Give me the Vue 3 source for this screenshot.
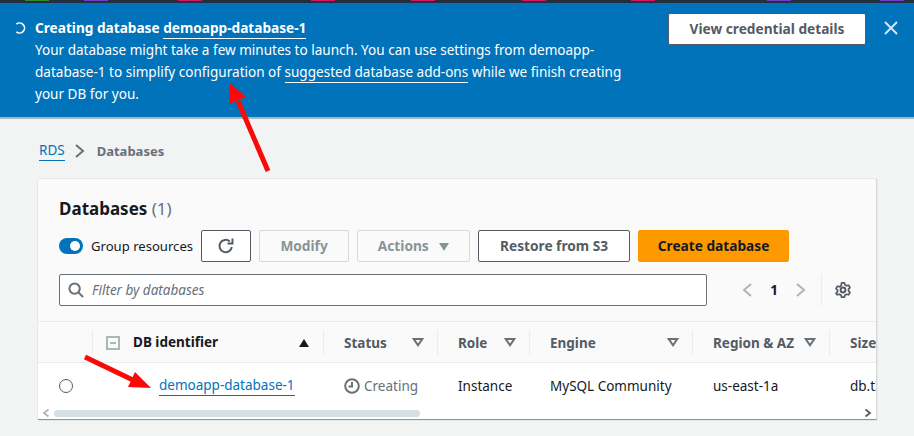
<template>
  <div class="page">
    <div class="topbar">
      <span v-for="tab in topTabs" :key="tab.x" class="tab" :style="{ left: tab.x + 'px', background: tab.color }"></span>
    </div>

    <div class="flash">
      <svg class="spinner" width="14" height="14" viewBox="0 0 14 14" fill="none">
        <path d="M3.4 3.100A5 5 0 1 1 3.400 10.900" stroke="#fff" stroke-width="1.600" />
      </svg>
      <div class="flash-body">
        <div class="flash-title">Creating database <a class="flash-link">demoapp-database-1</a></div>
        <div class="flash-text">
          Your database might take a few minutes to launch. You can use settings from demoapp-<br />
          database-1 to simplify configuration of <a class="flash-link">suggested database add-ons</a> while we finish creating<br />
          your DB for you.
        </div>
      </div>
      <button class="btn credential">View credential details</button>
      <svg class="close" width="16" height="16" viewBox="0 0 16 16" fill="none">
        <path d="M2 2l12 12M14 2L2 14" stroke="#d5e6f3" stroke-width="2" />
      </svg>
    </div>

    <div class="crumbs">
      <a class="crumb-link">RDS</a>
      <svg width="12" height="16" viewBox="0 0 12 16" fill="none">
        <path d="M2 2l7 6-7 6" stroke="#687078" stroke-width="2" />
      </svg>
      <span class="crumb-current">Databases</span>
    </div>

    <section class="card">
      <div class="card-head">
        <h2 class="title">Databases <span class="count">(1)</span></h2>
        <div class="actions">
          <span class="toggle"><span class="knob"></span></span>
          <span class="toggle-label">Group resources</span>
          <button class="btn refresh">
            <svg width="18" height="18" viewBox="0 0 18 18" fill="none">
              <path d="M14.800 10a6.200 6.200 0 1 1-2-5.600" stroke="#545b64" stroke-width="2" />
              <path d="M15.500 1.500v5h-5" stroke="#545b64" stroke-width="2" />
            </svg>
          </button>
          <button class="btn disabled modify">Modify</button>
          <button class="btn disabled actions-btn">Actions <i class="caret"></i></button>
          <button class="btn restore">Restore from S3</button>
          <button class="btn primary">Create database</button>
        </div>
        <div class="filter-row">
          <div class="filter">
            <svg width="16" height="16" viewBox="0 0 16 16" fill="none">
              <circle cx="6.600" cy="6.600" r="5.200" stroke="#687078" stroke-width="2" />
              <path d="M10.400 10.400l4.600 4.600" stroke="#687078" stroke-width="2" />
            </svg>
            <span class="placeholder">Filter by databases</span>
          </div>
          <div class="pager">
            <svg width="12" height="16" viewBox="0 0 12 16" fill="none">
              <path d="M10 2L3 8l7 6" stroke="#aab7b8" stroke-width="2" />
            </svg>
            <span class="page-num">1</span>
            <svg width="12" height="16" viewBox="0 0 12 16" fill="none">
              <path d="M2 2l7 6-7 6" stroke="#aab7b8" stroke-width="2" />
            </svg>
          </div>
          <div class="prefs">
            <svg width="18" height="18" viewBox="0 0 18 18" fill="none">
              <circle cx="9" cy="9" r="2.400" stroke="#545b64" stroke-width="2" />
              <path d="M7.600 1.800h2.800l.5 2 1.700 1 2-.6 1.400 2.400-1.500 1.500v1.800l1.500 1.500-1.400 2.400-2-.6-1.700 1-.5 2H7.600l-.5-2-1.700-1-2 .6L2 12.400l1.500-1.500V9.100L2 7.600 3.400 5.200l2 .6 1.700-1z" stroke="#545b64" stroke-width="1.700" stroke-linejoin="round" />
            </svg>
          </div>
        </div>
      </div>

      <div class="table">
        <div class="thead">
          <div class="cell select"></div>
          <div class="cell th ident">
            <span class="checkbox"><i></i></span>
            <span class="ident-label">DB identifier</span>
            <i class="sort-up"></i>
          </div>
          <div v-for="col in columns" :key="col.name" class="cell th" :style="{ width: col.width + 'px' }">
            <span>{{ col.name }}</span>
            <svg v-if="col.sort" class="sort-down" width="12" height="9" viewBox="0 0 12 9" fill="none">
              <path d="M1.800 1h8.400L6 7.200z" stroke="#687078" stroke-width="2" />
            </svg>
          </div>
        </div>
        <div class="tbody">
          <div class="cell select"><span class="radio"></span></div>
          <div class="cell ident ident-body"><a class="db-link">demoapp-database-1</a></div>
          <div class="cell status" :style="{ width: columns[0].width + 'px' }">
            <svg width="16" height="16" viewBox="0 0 16 16" fill="none">
              <circle cx="8" cy="8" r="6.800" stroke="#687078" stroke-width="2" />
              <path d="M8 4v4.500H4.500" stroke="#687078" stroke-width="2" />
            </svg>
            Creating
          </div>
          <div v-for="(val, i) in rowValues" :key="val" class="cell" :style="{ width: columns[i + 1].width + 'px' }">{{ val }}</div>
        </div>
        <div class="scroll">
          <svg class="scroll-arrow" width="8" height="10" viewBox="0 0 8 10" fill="none">
            <path d="M6.500 1.500L2 5l4.500 3.500" stroke="#aab7b8" stroke-width="1.800" />
          </svg>
          <span class="thumb"></span>
          <svg class="scroll-arrow right" width="8" height="10" viewBox="0 0 8 10" fill="none">
            <path d="M1.500 1.500L6 5 1.500 8.500" stroke="#545b64" stroke-width="1.800" />
          </svg>
        </div>
      </div>
    </section>

    <!-- red annotation arrows drawn over the screenshot -->
    <svg class="annot" width="914" height="436" viewBox="0 0 914 436">
      <path d="M268 171L238 101" stroke="#f90a0a" stroke-width="5" />
      <polygon points="230,83 246,97 229,104" fill="#f90a0a" />
      <path d="M85 357L135 381" stroke="#f90a0a" stroke-width="5" />
      <polygon points="151,388 128,387 135,372" fill="#f90a0a" />
    </svg>
  </div>
</template>

<script setup>
const topTabs = [
  { x: 25, color: '#2e8b2e' },
  { x: 84, color: '#6b3fc4' },
  { x: 178, color: '#d4156b' },
  { x: 311, color: '#d4156b' },
  { x: 411, color: '#d4156b' },
  { x: 522, color: '#d4156b' },
  { x: 631, color: '#d4156b' },
  { x: 767, color: '#6b3fc4' },
  { x: 880, color: '#6b3fc4' },
]

const columns = [
  { name: 'Status', width: 114, sort: true },
  { name: 'Role', width: 92, sort: true },
  { name: 'Engine', width: 163, sort: true },
  { name: 'Region & AZ', width: 137, sort: true },
  { name: 'Size', width: 80, sort: false },
]

const rowValues = ['Instance', 'MySQL Community', 'us-east-1a', 'db.t3.micro']
</script>

<style>
html,
body {
  margin: 0;
  background: #f2f3f3;
}
</style>

<style scoped>
.page {
  position: relative;
  width: 914px;
  height: 436px;
  overflow: hidden;
  background: #f2f3f3;
  font-family: "Noto Sans", "Open Sans", sans-serif;
  font-size: 13.5px;
  line-height: 22px;
  color: #16191f;
}

.topbar {
  position: relative;
  height: 3px;
  background: #232f3e;
}

.tab {
  position: absolute;
  top: 0;
  width: 24px;
  height: 1px;
}

.flash {
  display: flex;
  align-items: flex-start;
  box-sizing: border-box;
  height: 116px;
  padding: 10px 15px 0 13px;
  background: #0073bb;
  border-bottom: 2px solid #aab7b8;
  color: #fff;
}

.spinner {
  flex: none;
  margin: 8px 8px 0 0;
}

.flash-body {
  width: 633px;
  flex: none;
  margin-top: 4px;
}

.flash-title {
  font-weight: 700;
  font-size: 13.65px;
}

.flash-link {
  border-bottom: 1px solid #fff;
  padding-bottom: 1px;
}

.flash-text {
  font-size: 13.55px;
  white-space: nowrap;
}

.btn {
  box-sizing: border-box;
  height: 32px;
  border: 1px solid #545b64;
  border-radius: 2px;
  background: #fff;
  color: #545b64;
  font-family: inherit;
  font-size: 13.7px;
  font-weight: 700;
  line-height: 20px;
  padding: 0;
  white-space: nowrap;
}

.credential {
  flex: none;
  width: 198px;
}

.close {
  flex: none;
  margin: 7px 0 0 17px;
}

.crumbs {
  display: flex;
  align-items: center;
  gap: 9px;
  height: 22px;
  margin: 21px 0 17px 39px;
}

.crumb-link {
  color: #0073bb;
  border-bottom: 1px solid #0073bb;
  line-height: 19px;
}

.crumb-current {
  margin-left: 2px;
  color: #687078;
  font-weight: 700;
  font-size: 13px;
}

.card {
  margin-left: 38px;
  width: 839px;
  height: 241px;
  box-sizing: border-box;
  background: #fff;
  border-right: 1px solid #d5dbdb;
  border-bottom: 1px solid #879596;
  box-shadow: 0 0 1px #aab7b8;
  overflow: hidden;
}

.card-head {
  box-sizing: border-box;
  height: 143px;
  padding: 18px 0 0 21px;
  background: #fafafa;
  border-bottom: 1px solid #eaeded;
}

.title {
  margin: 0;
  font-size: 17px;
  line-height: 24px;
  font-weight: 700;
}

.count {
  font-weight: 400;
  color: #687078;
}

.actions {
  display: flex;
  align-items: center;
  height: 32px;
  margin-top: 9px;
}

.toggle {
  display: flex;
  justify-content: flex-end;
  align-items: center;
  box-sizing: border-box;
  width: 24px;
  height: 16px;
  padding: 0 3px;
  border-radius: 8px;
  background: #0073bb;
}

.knob {
  width: 10px;
  height: 10px;
  border-radius: 50%;
  background: #fff;
}

.toggle-label {
  margin-left: 8px;
  font-size: 13.1px;
  color: #16191f;
}

.refresh {
  display: flex;
  align-items: center;
  justify-content: center;
  width: 50px;
  margin-left: 8px;
}

.disabled {
  background: #fafafa;
  border-color: #d5dbdb;
  color: #879596;
}

.modify {
  width: 90px;
  margin-left: 8px;
}

.actions-btn {
  width: 113px;
  margin-left: 8px;
}

.caret {
  display: inline-block;
  width: 0;
  height: 0;
  margin-left: 7px;
  border-left: 5px solid transparent;
  border-right: 5px solid transparent;
  border-top: 8px solid #879596;
}

.restore {
  width: 152px;
  margin-left: 8px;
}

.primary {
  width: 151px;
  margin-left: 8px;
  background: #ff9900;
  border-color: #ff9900;
  color: #16191f;
}

.filter-row {
  display: flex;
  align-items: center;
  height: 32px;
  margin-top: 12px;
}

.filter {
  display: flex;
  align-items: center;
  gap: 8px;
  box-sizing: border-box;
  width: 648px;
  height: 32px;
  padding-left: 8px;
  background: #fff;
  border: 1px solid #687078;
  border-radius: 2px;
}

.placeholder {
  font-style: italic;
  color: #687078;
}

.pager {
  display: flex;
  align-items: center;
  flex: none;
  margin-left: 34px;
}

.pager svg {
  flex: none;
}

.page-num {
  width: 42px;
  flex: none;
  text-align: center;
  font-weight: 700;
}

.prefs {
  display: flex;
  align-items: center;
  flex: none;
  box-sizing: border-box;
  height: 32px;
  margin-left: 14px;
  padding-left: 12px;
  border-left: 1px solid #eaeded;
}

.table {
  position: relative;
}

.thead,
.tbody {
  display: flex;
  width: 900px;
}

.thead {
  height: 41px;
  background: #fafafa;
  border-bottom: 1px solid #eaeded;
  box-sizing: border-box;
}

.tbody {
  height: 45px;
  background: #fff;
}

.cell {
  display: flex;
  align-items: center;
  flex: none;
  box-sizing: border-box;
  padding-left: 21px;
  white-space: nowrap;
}

.th {
  position: relative;
  justify-content: space-between;
  padding-left: 20px;
  padding-right: 13px;
  font-weight: 700;
  color: #545b64;
  border-left: 1px solid #eaeded;
  margin: 8px 0 7px;
  height: 25px;
}

.select {
  width: 54px;
}

.ident {
  width: 231px;
}

.th.ident {
  justify-content: flex-start;
  padding-left: 13px;
  padding-right: 14px;
  color: #16191f;
}

.checkbox {
  display: flex;
  align-items: center;
  justify-content: center;
  box-sizing: border-box;
  width: 14px;
  height: 14px;
  border: 2px solid #aab7b8;
}

.checkbox i {
  width: 6px;
  height: 2px;
  background: #aab7b8;
}

.ident-label {
  margin: -2px auto 0 13px;
}

.sort-up {
  width: 0;
  height: 0;
  border-left: 5px solid transparent;
  border-right: 5px solid transparent;
  border-bottom: 8px solid #16191f;
}

.sort-down {
  flex: none;
}

.radio {
  box-sizing: border-box;
  width: 14px;
  height: 14px;
  border: 1px solid #545b64;
  border-radius: 50%;
  background: #fff;
}

.ident-body {
  padding-left: 67px;
}

.db-link {
  color: #0073bb;
  border-bottom: 1px solid #0073bb;
  line-height: 20px;
}

.status {
  gap: 4px;
  color: #687078;
}

.scroll {
  display: flex;
  align-items: center;
  position: relative;
  height: 14px;
  margin-top: -2px;
  padding-left: 4px;
}

.thumb {
  width: 366px;
  height: 7px;
  margin-left: 4px;
  border-radius: 4px;
  background: #d5dfe6;
}

.scroll-arrow.right {
  position: absolute;
  right: 4px;
}

.annot {
  position: absolute;
  left: 0;
  top: 0;
  pointer-events: none;
}
</style>
